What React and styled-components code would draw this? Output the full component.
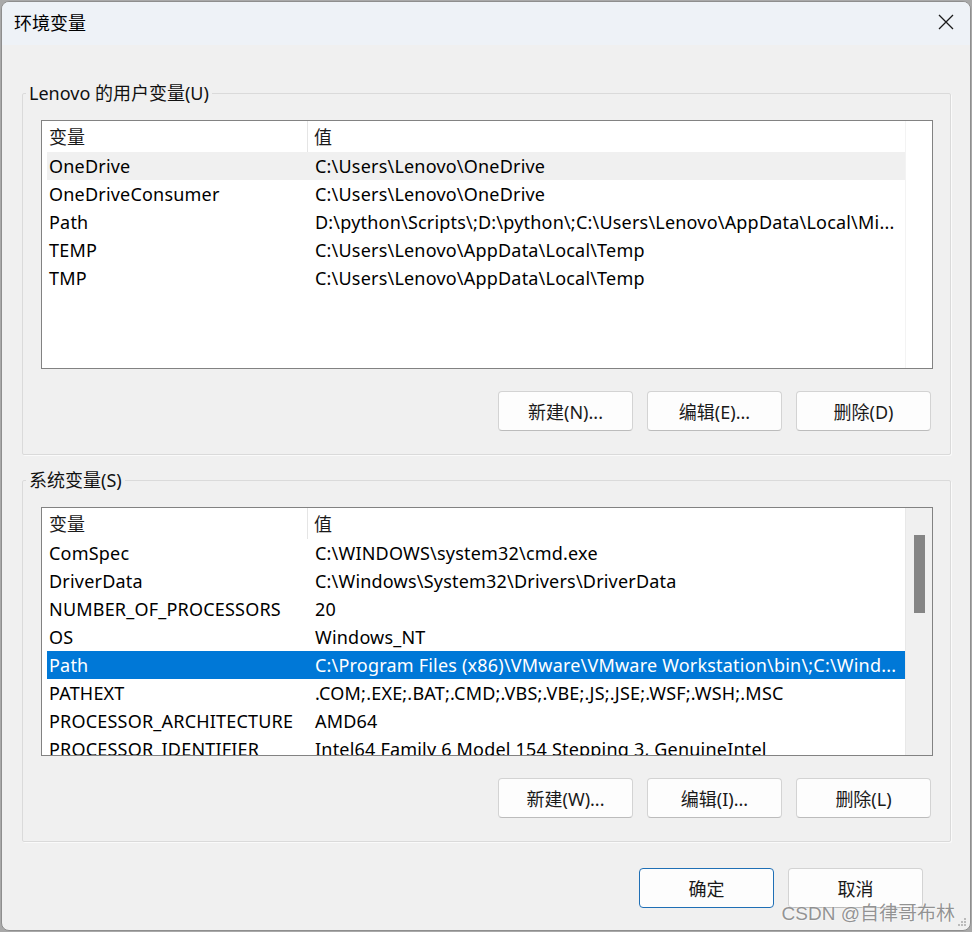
import React from "react";
import styled, { createGlobalStyle, css } from "styled-components";

const GlobalStyle = createGlobalStyle`
	html, body {
		margin: 0;
		background: #a9a9a9;
	}
	body {
		font-family: "Noto Sans", "Noto Sans CJK SC", sans-serif;
		font-size: 18px;
		color: #000;
	}
	* {
		box-sizing: border-box;
	}
`;

const Dialog = styled.div`
	position: relative;
	margin: 1px;
	width: 970px;
	height: 930px;
	background: #f0f0f0;
	border: 1px solid #8e8e8e;
	border-radius: 8px;
	overflow: hidden;
	display: flex;
	flex-direction: column;
`;

const TitleBar = styled.div`
	height: 43px;
	flex-shrink: 0;
	display: flex;
	align-items: center;
	justify-content: space-between;
	padding: 0 16px 4px 12px;
	background: #eef2f7;
`;

const Title = styled.span`
	font-family: "Noto Sans CJK SC", sans-serif;
	font-size: 18px;
	line-height: 24px;
`;

const CloseIcon = styled.svg`
	width: 16px;
	height: 16px;
	display: block;
`;

const Body = styled.div`
	flex: 1;
	display: flex;
	flex-direction: column;
	padding: 35px 19px 0 20px;
`;

const Group = styled.fieldset`
	margin: 0;
	min-width: 0;
	padding: 14px 17px 23px 18px;
	border: 1px solid #dadada;
	border-radius: 2px;
	box-shadow: 1px 1px 0 #fafafa;

	& + & {
		margin-top: 12px;
	}
`;

const Legend = styled.legend`
	padding: 0 3px;
	margin-left: -15px;
	font-size: 18px;
	line-height: 26px;
	color: #111;
`;

const ListBox = styled.div`
	height: 249px;
	border: 1px solid #828282;
	background: #fff;
	display: grid;
	grid-template-columns: 1fr 27px;
	overflow: hidden;
`;

const ListMain = styled.div`
	display: flex;
	flex-direction: column;
	overflow: hidden;
	min-width: 0;
`;

const ScrollTrack = styled.div`
	background: ${({ $visible }) => ($visible ? "#f0f0f0" : "#fff")};
	border-left: 1px solid ${({ $visible }) => ($visible ? "#e8e8e8" : "#f3f3f3")};
	padding-top: 27px;
	display: flex;
	justify-content: center;
`;

const ScrollThumb = styled.div`
	width: 11px;
	height: 78px;
	background: #858585;
	margin-left: 1px;
`;

const HeaderRow = styled.div`
	display: grid;
	grid-template-columns: 266px 1fr;
	height: 31px;
	flex-shrink: 0;
`;

const HeaderCell = styled.div`
	display: flex;
	align-items: center;
	padding-left: ${({ $first }) => ($first ? "7px" : "6px")};
	border-right: ${({ $first }) => ($first ? "1px solid #e5e5e5" : "none")};
	color: #1a1a1a;
	line-height: 24px;
`;

const Row = styled.div`
	display: grid;
	grid-template-columns: 266px 1fr;
	height: 28px;
	flex-shrink: 0;
	margin-left: 5px;
	align-items: center;

	${({ $state }) =>
		$state === "hover" &&
		css`
			background: #f0f0f0;
		`}

	${({ $state }) =>
		$state === "selected" &&
		css`
			background: #0078d7;
			color: #fff;
		`}
`;

const Cell = styled.div`
	padding-left: 2px;
	white-space: nowrap;
	overflow: hidden;
	line-height: 28px;
	letter-spacing: 0.2px;
`;

const ButtonRow = styled.div`
	display: flex;
	justify-content: flex-end;
	gap: 14px;
	margin: 22px 2px 0 0;
`;

const Button = styled.button`
	width: 135px;
	height: 40px;
	padding: 0;
	font-family: "Noto Sans", "Noto Sans CJK SC", sans-serif;
	font-size: 18px;
	color: #1a1a1a;
	background: #fdfdfd;
	border: 1px solid #d3d3d3;
	border-bottom-color: #bcbcbc;
	border-radius: 4px;

	${({ $primary }) =>
		$primary &&
		css`
			border: 1px solid #1f6fb5;
			box-shadow: inset 0 0 0 1px #fdfdfd;
		`}
`;

const Footer = styled.div`
	display: flex;
	justify-content: flex-end;
	gap: 14px;
	margin-top: 26px;
	padding-right: 28px;
`;

const Watermark = styled.div`
	position: absolute;
	right: 15px;
	bottom: 4px;
	font-family: "Liberation Sans", "Noto Sans CJK SC", sans-serif;
	font-size: 19px;
	line-height: 24px;
	color: rgba(128, 128, 128, 0.85);
	text-shadow: 0 0 2px #fff;
	pointer-events: none;
`;

const Grip = styled.svg`
	position: absolute;
	right: 3px;
	bottom: 3px;
	width: 10px;
	height: 10px;
`;

const userVars = [
	["OneDrive", "C:\\Users\\Lenovo\\OneDrive", "hover"],
	["OneDriveConsumer", "C:\\Users\\Lenovo\\OneDrive"],
	["Path", "D:\\python\\Scripts\\;D:\\python\\;C:\\Users\\Lenovo\\AppData\\Local\\Mi..."],
	["TEMP", "C:\\Users\\Lenovo\\AppData\\Local\\Temp"],
	["TMP", "C:\\Users\\Lenovo\\AppData\\Local\\Temp"],
];

const systemVars = [
	["ComSpec", "C:\\WINDOWS\\system32\\cmd.exe"],
	["DriverData", "C:\\Windows\\System32\\Drivers\\DriverData"],
	["NUMBER_OF_PROCESSORS", "20"],
	["OS", "Windows_NT"],
	["Path", "C:\\Program Files (x86)\\VMware\\VMware Workstation\\bin\\;C:\\Wind...", "selected"],
	["PATHEXT", ".COM;.EXE;.BAT;.CMD;.VBS;.VBE;.JS;.JSE;.WSF;.WSH;.MSC"],
	["PROCESSOR_ARCHITECTURE", "AMD64"],
	["PROCESSOR_IDENTIFIER", "Intel64 Family 6 Model 154 Stepping 3, GenuineIntel"],
];

const VarList = ({ rows, scrollable }) => (
	<ListBox>
		<ListMain>
			<HeaderRow>
				<HeaderCell $first>变量</HeaderCell>
				<HeaderCell>值</HeaderCell>
			</HeaderRow>
			{rows.map(([name, value, state], i) => (
				<Row key={i} $state={state}>
					<Cell>{name}</Cell>
					<Cell>{value}</Cell>
				</Row>
			))}
		</ListMain>
		<ScrollTrack $visible={scrollable}>
			{scrollable ? <ScrollThumb /> : null}
		</ScrollTrack>
	</ListBox>
);

const VarGroup = ({ title, rows, scrollable, keys }) => (
	<Group>
		<Legend>{title}</Legend>
		<VarList rows={rows} scrollable={scrollable} />
		<ButtonRow>
			<Button>新建({keys[0]})...</Button>
			<Button>编辑({keys[1]})...</Button>
			<Button>删除({keys[2]})</Button>
		</ButtonRow>
	</Group>
);

export default function App() {
	return (
		<>
			<GlobalStyle />
			<Dialog>
				<TitleBar>
					<Title>环境变量</Title>
					<CloseIcon viewBox="0 0 16 16">
						<path d="M1 1 L15 15 M15 1 L1 15" stroke="#1a1a1a" strokeWidth="1.3" fill="none" />
					</CloseIcon>
				</TitleBar>
				<Body>
					<VarGroup title="Lenovo 的用户变量(U)" rows={userVars} keys={["N", "E", "D"]} />
					<VarGroup title="系统变量(S)" rows={systemVars} scrollable keys={["W", "I", "L"]} />
					<Footer>
						<Button $primary>确定</Button>
						<Button>取消</Button>
					</Footer>
				</Body>
				<Watermark>CSDN @自律哥布林</Watermark>
				<Grip viewBox="0 0 10 10">
					<rect x="7" y="1" width="2" height="2" fill="#bbb" />
					<rect x="4" y="4" width="2" height="2" fill="#bbb" />
					<rect x="7" y="4" width="2" height="2" fill="#bbb" />
					<rect x="1" y="7" width="2" height="2" fill="#bbb" />
					<rect x="4" y="7" width="2" height="2" fill="#bbb" />
					<rect x="7" y="7" width="2" height="2" fill="#bbb" />
				</Grip>
			</Dialog>
		</>
	);
}
